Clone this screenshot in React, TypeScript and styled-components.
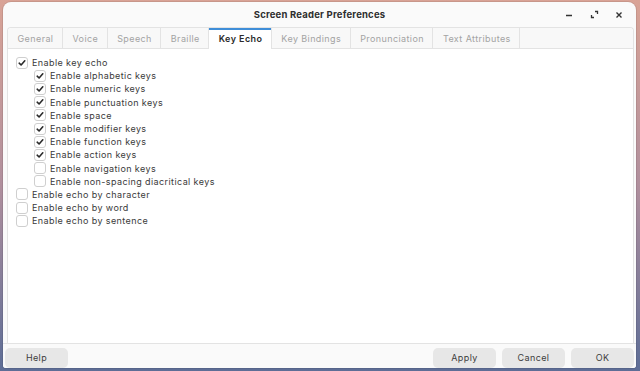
import React from "react";
import styled, { createGlobalStyle } from "styled-components";

const Global = createGlobalStyle`
  html, body { margin: 0; padding: 0; }
  body {
    width: 640px; height: 371px; overflow: hidden;
    background: linear-gradient(180deg, #d9a396 0%, #b08f9d 50%, #5d6d96 100%);
    font-family: Inter, "Open Sans", sans-serif;
  }
`;

const Desktop = styled.div`
  box-sizing: border-box;
  width: 640px;
  height: 371px;
  padding: 2px 4px 3px 3px;
  display: flex;
`;

const Window = styled.div`
  flex: 1;
  display: flex;
  flex-direction: column;
  background: #fafafa;
  border-radius: 8px 8px 3px 3px;
  overflow: hidden;
  box-shadow: 0 0 0 1px rgba(0,0,0,0.08);
`;

const TitleBar = styled.div`
  height: 25px;
  display: grid;
  grid-template-columns: 1fr auto 1fr;
  align-items: center;
  flex-shrink: 0;
`;

const Title = styled.div`
  grid-column: 2;
  font-size: 9.5px;
  font-weight: 700;
  color: #2e2e2e;
  letter-spacing: 0.2px;
`;

const Controls = styled.div`
  grid-column: 3;
  justify-self: end;
  display: flex;
  align-items: center;
  padding-right: 6px;
`;

const CtrlBtn = styled.div`
  width: 22px;
  height: 18px;
  display: flex;
  align-items: center;
  justify-content: center;
  color: #333;
  margin-left: 3px;
`;

const Notebook = styled.div`
  flex: 1;
  margin: 0 2px 0 4px;
  display: flex;
  flex-direction: column;
  border: 1px solid #e3e3e3;
  border-bottom: none;
  border-radius: 4px 4px 0 0;
  background: #ffffff;
`;

const TabRow = styled.div`
  display: flex;
  height: 20px;
  background: #f8f8f8;
  border-bottom: 1px solid #e3e3e3;
  border-radius: 4px 4px 0 0;
`;

const Tab = styled.div<{ $active?: boolean }>`
  display: flex;
  align-items: center;
  justify-content: center;
  padding: 0 8.5px 0 9.5px;
  font-size: 9px;
  letter-spacing: 0.4px;
  font-weight: ${p => (p.$active ? 600 : 400)};
  color: ${p => (p.$active ? "#2b2b2b" : "#a3a3a3")};
  background: ${p => (p.$active ? "#ffffff" : "transparent")};
  border-right: 1px solid #e3e3e3;
  box-shadow: ${p => (p.$active ? "inset 0 2px 0 #3f8ed8" : "none")};
  margin-bottom: ${p => (p.$active ? "-1px" : "0")};
`;

const Content = styled.div`
  flex: 1;
  padding: 7px 8px;
  display: flex;
  flex-direction: column;
`;

const Row = styled.label<{ $indent?: boolean }>`
  display: flex;
  align-items: center;
  height: 13.2px;
  padding-left: ${p => (p.$indent ? "18px" : "0")};
  font-size: 9px;
  letter-spacing: 0.4px;
  color: #3a3a3a;
`;

const Box = styled.span<{ $checked?: boolean }>`
  box-sizing: border-box;
  width: 12px;
  height: 12px;
  border: 1px solid #cfcfcf;
  border-radius: 3px;
  background: #ffffff;
  margin-right: 4px;
  display: flex;
  align-items: center;
  justify-content: center;
  flex-shrink: 0;
`;

const ActionBar = styled.div`
  display: flex;
  align-items: center;
  border-top: 1px solid #e3e3e3;
  padding: 4px 2px 1px 2px;
  height: 25px;
  box-sizing: border-box;
  flex-shrink: 0;
  background: #fafafa;
`;

const Spacer = styled.div`
  flex: 1;
`;

const Button = styled.div`
  width: 63px;
  height: 20px;
  border-radius: 5px;
  background: #e7e7e7;
  display: flex;
  align-items: center;
  justify-content: center;
  font-size: 9px;
  letter-spacing: 0.4px;
  color: #3d3d3d;
  & + & { margin-left: 6px; }
`;

const Check = () => (
  <svg width="8" height="8" viewBox="0 0 8 8">
    <path d="M1.2 4.2 L3.1 6 L6.8 1.8" fill="none" stroke="#2a2a2a" strokeWidth="1.6" strokeLinecap="round" strokeLinejoin="round" />
  </svg>
);

const items: { label: string; checked: boolean; indent?: boolean }[] = [
  { label: "Enable key echo", checked: true },
  { label: "Enable alphabetic keys", checked: true, indent: true },
  { label: "Enable numeric keys", checked: true, indent: true },
  { label: "Enable punctuation keys", checked: true, indent: true },
  { label: "Enable space", checked: true, indent: true },
  { label: "Enable modifier keys", checked: true, indent: true },
  { label: "Enable function keys", checked: true, indent: true },
  { label: "Enable action keys", checked: true, indent: true },
  { label: "Enable navigation keys", checked: false, indent: true },
  { label: "Enable non-spacing diacritical keys", checked: false, indent: true },
  { label: "Enable echo by character", checked: false },
  { label: "Enable echo by word", checked: false },
  { label: "Enable echo by sentence", checked: false },
];

const tabs = ["General", "Voice", "Speech", "Braille", "Key Echo", "Key Bindings", "Pronunciation", "Text Attributes"];

export default function App() {
  return (
    <>
      <Global />
      <Desktop>
        <Window>
          <TitleBar>
            <Title>Screen Reader Preferences</Title>
            <Controls>
              <CtrlBtn>
                <svg width="8" height="8" viewBox="0 0 8 8"><path d="M1 4.5 H7" stroke="#333" strokeWidth="1.3" /></svg>
              </CtrlBtn>
              <CtrlBtn>
                <svg width="9" height="9" viewBox="0 0 9 9">
                  <path d="M5 1.5 H7.5 V4" fill="none" stroke="#333" strokeWidth="1.3" />
                  <path d="M1.5 5 V7.5 H4" fill="none" stroke="#333" strokeWidth="1.3" />
                </svg>
              </CtrlBtn>
              <CtrlBtn>
                <svg width="8" height="8" viewBox="0 0 8 8"><path d="M1.5 1.5 L6.5 6.5 M6.5 1.5 L1.5 6.5" stroke="#333" strokeWidth="1.4" /></svg>
              </CtrlBtn>
            </Controls>
          </TitleBar>
          <Notebook>
            <TabRow>
              {tabs.map(t => (
                <Tab key={t} $active={t === "Key Echo"}>{t}</Tab>
              ))}
            </TabRow>
            <Content>
              {items.map(it => (
                <Row key={it.label} $indent={it.indent}>
                  <Box $checked={it.checked}>{it.checked && <Check />}</Box>
                  {it.label}
                </Row>
              ))}
            </Content>
          </Notebook>
          <ActionBar>
            <Button>Help</Button>
            <Spacer />
            <Button>Apply</Button>
            <Button>Cancel</Button>
            <Button>OK</Button>
          </ActionBar>
        </Window>
      </Desktop>
    </>
  );
}
